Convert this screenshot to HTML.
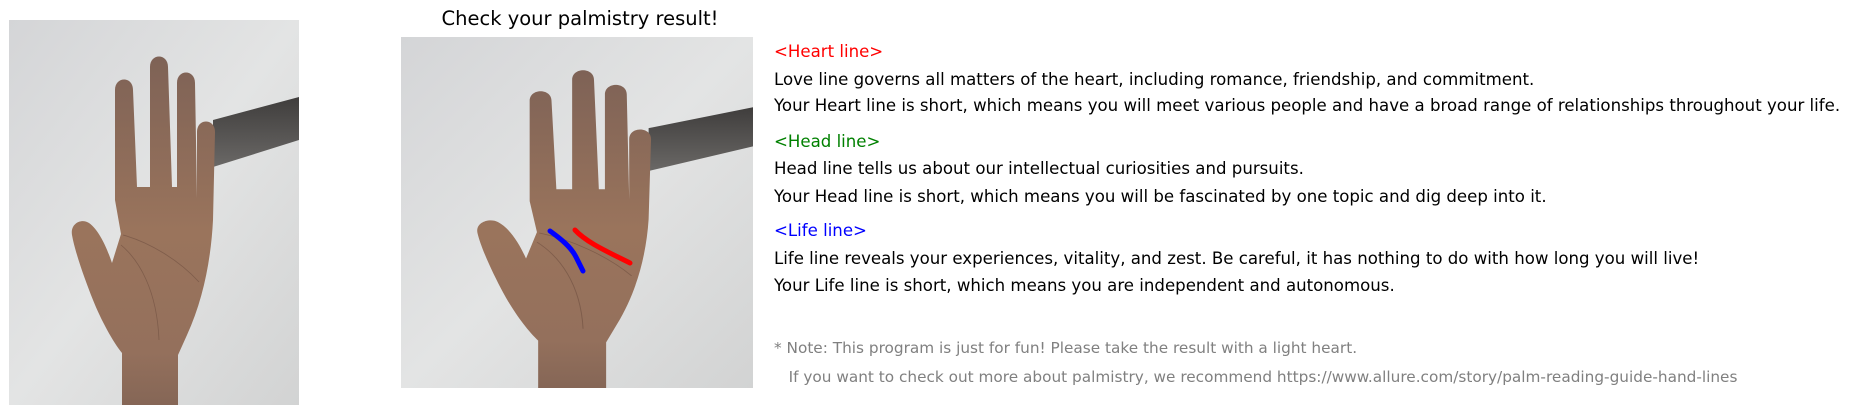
<!DOCTYPE html>
<html><head><meta charset="utf-8"><style>
html,body{margin:0;padding:0;background:#fff;width:1851px;height:415px;overflow:hidden;position:relative;font-family:"DejaVu Sans","Liberation Sans",sans-serif;}
.t{position:absolute;left:774px;font-size:16.6px;white-space:nowrap;line-height:20px;color:#000}
.n{font-size:15.3px;color:#808080}
svg{position:absolute}
</style></head><body>
<svg width="0" height="0" style="position:absolute">
<defs>
<linearGradient id="bg" x1="0" y1="0" x2="1" y2="1"><stop offset="0" stop-color="#d4d5d7"/><stop offset="0.5" stop-color="#e3e4e4"/><stop offset="1" stop-color="#d2d3d3"/></linearGradient>
<linearGradient id="sk" x1="0" y1="0" x2="0" y2="1"><stop offset="0" stop-color="#7e6256"/><stop offset="0.5" stop-color="#9a745c"/><stop offset="0.85" stop-color="#94705c"/><stop offset="1" stop-color="#856656"/></linearGradient>
<linearGradient id="bar" x1="0" y1="0" x2="0" y2="1"><stop offset="0" stop-color="#3f3d3c"/><stop offset="1" stop-color="#6a6866"/></linearGradient>
<g id="hand">
<rect width="290" height="385" fill="url(#bg)"/>
<polygon points="204,100 290,77 290,120 204,147" fill="url(#bar)"/>
<path fill="url(#sk)" d="M113,385 L113,333 C104,322 92,300 84,280 C76,260 66,232 63,215 C61,203 73,198 80,203 C90,210 98,228 103,243 L112,214 L106,180 L106,70 C106,56 124,56 124,70 L128,167 L141,167 L141,47 C141,33 159,33 159,47 L163,167 L168,167 L168,63 C168,49 186,49 186,63 L188,178 L188,112 C188,98 206,98 206,112 L204,200 C202,240 194,280 178,315 L169,335 L169,385 Z"/>
<path d="M114,215 C140,222 170,240 190,262 M112,225 C130,240 148,270 150,320" stroke="#6e4e40" stroke-width="0.8" fill="none" opacity="0.6"/>
</g>
</defs></svg>
<svg style="left:9px;top:20px" width="290" height="385" viewBox="0 0 290 385" preserveAspectRatio="none"><use href="#hand"/></svg>
<svg style="left:401px;top:37px" width="352" height="351" viewBox="0 0 290 385" preserveAspectRatio="none"><use href="#hand"/></svg>
<svg style="left:401px;top:37px" width="352" height="351" viewBox="0 0 352 351">
<path d="M149,194 C160,202 170,210 175,220 C178,226 180,230 182,234" stroke="#0000ff" stroke-width="5" fill="none" stroke-linecap="round"/>
<path d="M174,193 C185,205 205,214 229,226" stroke="#ff0000" stroke-width="5" fill="none" stroke-linecap="round"/>
</svg>
<div style="position:absolute;left:401px;width:358px;top:7px;text-align:center;font-size:19.5px;line-height:24px">Check your palmistry result!</div>
<div class="t" style="top:42px;color:#ff0000">&lt;Heart line&gt;</div>
<div class="t" style="top:70px">Love line governs all matters of the heart, including romance, friendship, and commitment.</div>
<div class="t" style="top:96px">Your Heart line is short, which means you will meet various people and have a broad range of relationships throughout your life.</div>
<div class="t" style="top:132px;color:#008000">&lt;Head line&gt;</div>
<div class="t" style="top:159px">Head line tells us about our intellectual curiosities and pursuits.</div>
<div class="t" style="top:187px">Your Head line is short, which means you will be fascinated by one topic and dig deep into it.</div>
<div class="t" style="top:221px;color:#0000ff">&lt;Life line&gt;</div>
<div class="t" style="top:249px">Life line reveals your experiences, vitality, and zest. Be careful, it has nothing to do with how long you will live!</div>
<div class="t" style="top:276px">Your Life line is short, which means you are independent and autonomous.</div>
<div class="t n" style="top:338px">* Note: This program is just for fun! Please take the result with a light heart.</div>
<div class="t n" style="top:367px">&nbsp;&nbsp;&nbsp;If you want to check out more about palmistry, we recommend https://www.allure.com/story/palm-reading-guide-hand-lines</div>
</body></html>
